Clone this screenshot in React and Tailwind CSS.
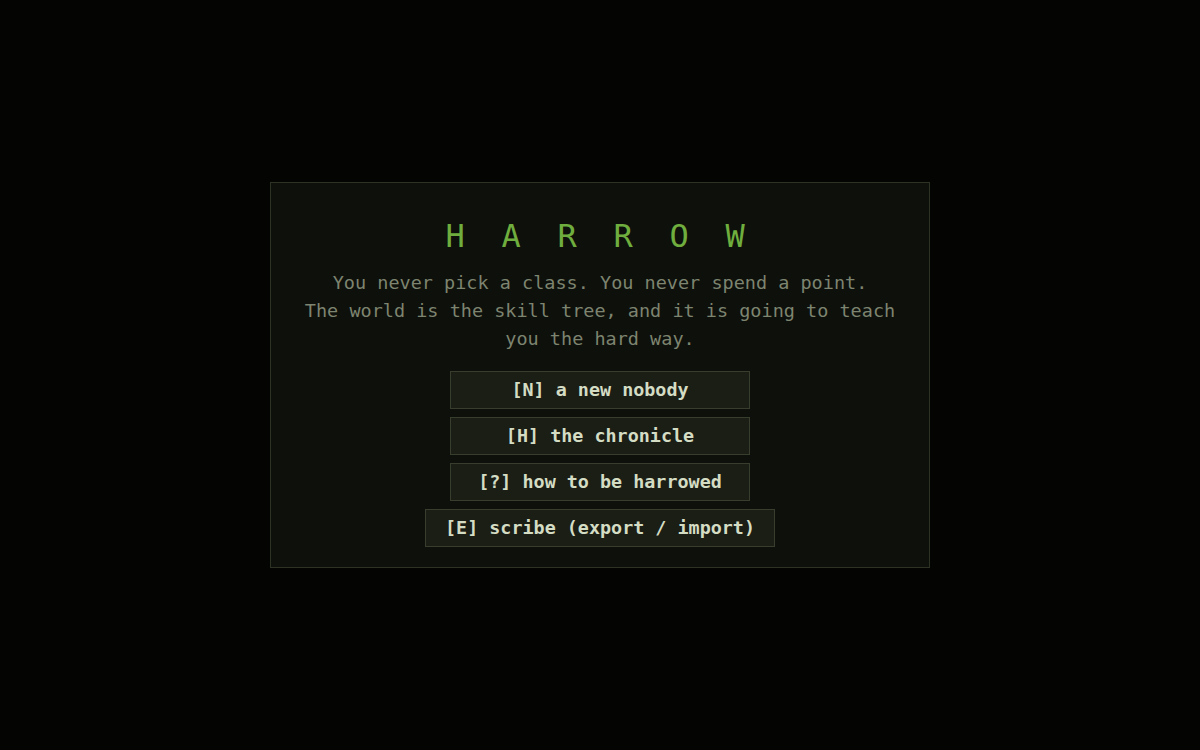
import React from 'react';

const MONO = { fontFamily: '"DejaVu Sans Mono", "Liberation Mono", monospace' };

const options = [
  { key: 'N', label: 'a new nobody' },
  { key: 'H', label: 'the chronicle' },
  { key: '?', label: 'how to be harrowed' },
  { key: 'E', label: 'scribe (export / import)' },
];

export default function App() {
  return (
    <div className="min-h-screen w-full bg-[#040503] flex items-center justify-center" style={MONO}>
      {/* Title card */}
      <div className="w-[660px] border border-[#2c3224] bg-[#0e100b] px-8 pt-[34px] pb-[20px] flex flex-col items-center text-center">
        <h1 className="text-[32px] leading-[38px] text-[#6fae3e] tracking-[36.7px] pl-[27px] font-normal">
          HARROW
        </h1>
        <p className="mt-[14px] text-[18.5px] leading-[28px] text-[#7d8470]">
          You never pick a class. You never spend a point.
          <br />
          The world is the skill tree, and it is going to teach you the hard way.
        </p>

        <div className="mt-[18px] flex flex-col items-center gap-2">
          {options.map((o) => (
            <button
              key={o.key}
              className="min-w-[300px] h-[38px] px-[19px] border border-[#383e2e] bg-[#1a1e15] text-[#d4dcc4] text-[18.4px] font-bold hover:bg-[#232a1c] transition"
            >
              [{o.key}] {o.label}
            </button>
          ))}
        </div>
      </div>
    </div>
  );
}
